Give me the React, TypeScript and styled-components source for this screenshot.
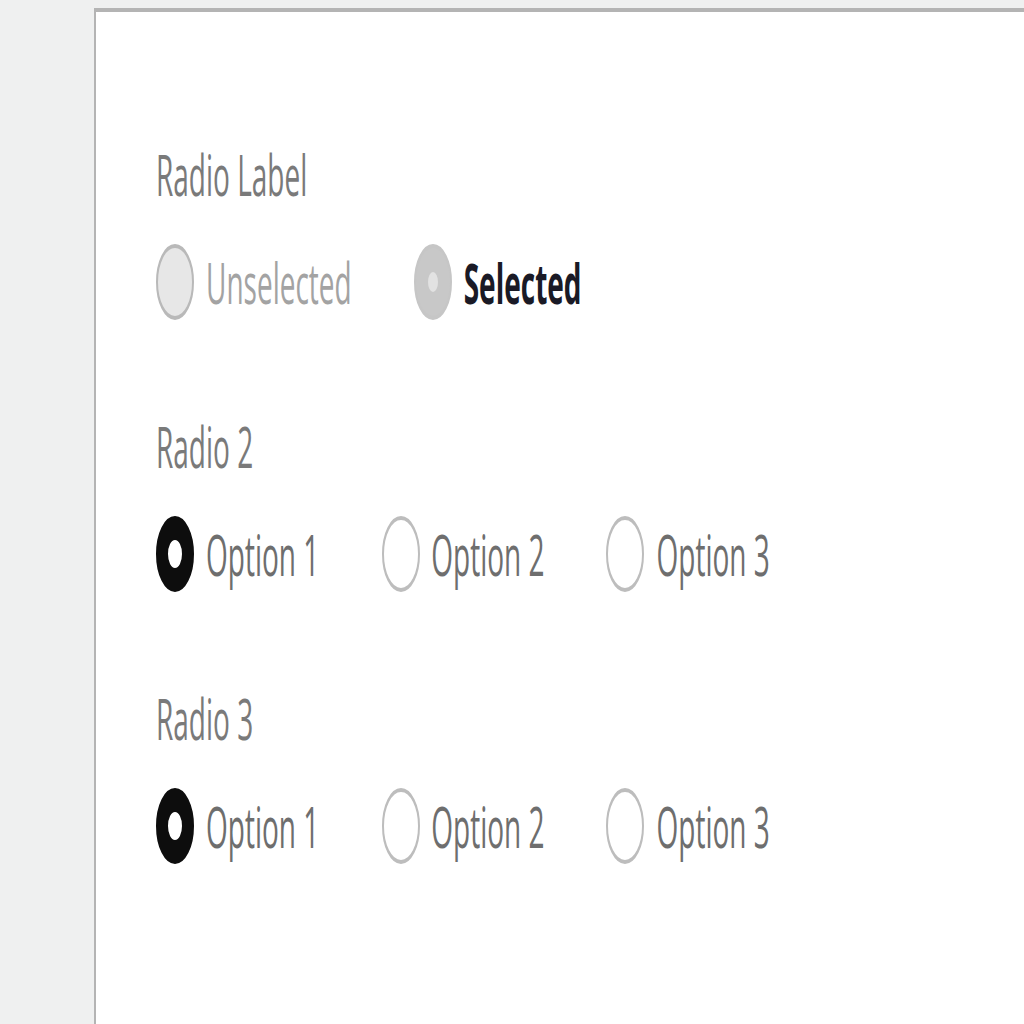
import React, { useState } from "react";
import styled, { createGlobalStyle } from "styled-components";

const GlobalStyle = createGlobalStyle`
  html {
    overflow: hidden;
  }
  body {
    margin: 0;
    background: #eff0f0;
    min-height: 1024px;
  }
`;

// the reference is a small screen stretched to 1024x1024
const Stage = styled.div`
  width: 512px;
  height: 256px;
  box-sizing: border-box;
  padding: 2px 0 0 47px;
  transform: scale(2, 4);
  transform-origin: 0 0;
  font-family: "Open Sans", "Noto Sans", sans-serif;
`;

const Panel = styled.div`
  height: 100%;
  box-sizing: border-box;
  background: #ffffff;
  border-top: 1px solid #b4b4b4;
  border-left: 1px solid #b4b4b4;
  padding: 31px 0 0 30px;
`;

const Group = styled.div`
  margin-bottom: 22px;
`;

const GroupLabel = styled.div`
  font-size: 14px;
  line-height: 19px;
  color: #7a7a7a;
  margin-bottom: 8px;
`;

const Row = styled.div`
  display: flex;
  align-items: center;
  gap: 31px;
`;

const Option = styled.label`
  display: flex;
  align-items: center;
  gap: 6px;
  cursor: pointer;
`;

type Variant = "off" | "on" | "disabledOff" | "disabledOn";

const Circle = styled.span<{ $v: Variant }>`
  width: 19px;
  height: 19px;
  box-sizing: border-box;
  border-radius: 50%;
  flex: none;
  display: flex;
  align-items: center;
  justify-content: center;
  background: ${(p) =>
    p.$v === "on" ? "#ffffff" : p.$v === "disabledOff" ? "#e7e7e7" : p.$v === "disabledOn" ? "#c8c8c8" : "#ffffff"};
  border: ${(p) =>
    p.$v === "on"
      ? "6px solid #0d0d0d"
      : p.$v === "disabledOff"
      ? "1px solid #b9b9b9"
      : p.$v === "disabledOn"
      ? "1px solid #c6c6c6"
      : "1px solid #bdbdbd"};
`;

const Dot = styled.span`
  width: 5px;
  height: 5px;
  border-radius: 50%;
  background: #e2e2e2;
`;

const Text = styled.span<{ $tone: "normal" | "muted" | "strong" }>`
  font-size: 14px;
  line-height: 19px;
  color: ${(p) => (p.$tone === "muted" ? "#a3a3a3" : p.$tone === "strong" ? "#1a1a26" : "#6e6e6e")};
  font-weight: ${(p) => (p.$tone === "strong" ? 700 : 400)};
`;

const options = ["Option 1", "Option 2", "Option 3"];

const RadioGroup = ({ label }: { label: string }) => {
  const [value, setValue] = useState(options[0]);
  return (
    <Group>
      <GroupLabel>{label}</GroupLabel>
      <Row>
        {options.map((o) => (
          <Option key={o} onClick={() => setValue(o)}>
            <Circle $v={value === o ? "on" : "off"} />
            <Text $tone="normal">{o}</Text>
          </Option>
        ))}
      </Row>
    </Group>
  );
};

const App = () => {
  return (
    <>
      <GlobalStyle />
      <Stage>
        <Panel>
          <Group>
            <GroupLabel>Radio Label</GroupLabel>
            <Row>
              <Option>
                <Circle $v="disabledOff" />
                <Text $tone="muted">Unselected</Text>
              </Option>
              <Option>
                <Circle $v="disabledOn">
                  <Dot />
                </Circle>
                <Text $tone="strong">Selected</Text>
              </Option>
            </Row>
          </Group>
          <RadioGroup label="Radio 2" />
          <RadioGroup label="Radio 3" />
        </Panel>
      </Stage>
    </>
  );
};

export default App;
